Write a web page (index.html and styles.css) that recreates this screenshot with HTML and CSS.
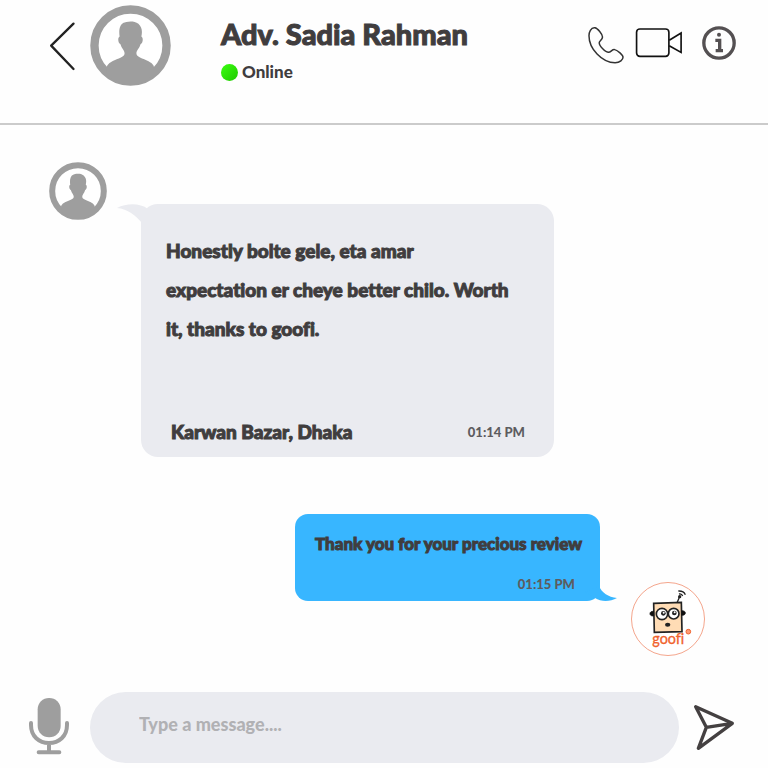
FILE: index.html
```html
<!DOCTYPE html>
<html lang="en">
<head>
    <meta charset="UTF-8">
    <meta name="viewport" content="width=device-width, initial-scale=1.0">
    <title>Adv. Sadia Rahman</title>
    <link rel="stylesheet" href="styles.css">
</head>
<body>
    <svg class="symbols" aria-hidden="true">
        <symbol id="person" viewBox="0 0 82 82">
            <circle cx="41" cy="41" r="36.5" fill="#fff" stroke="#9e9e9e" stroke-width="8.5"/>
            <path fill="#9e9e9e" d="M34 18C36 17 44 15 49 19C53 23 53 27 52 32C54 33 54 38 51 40C50 44 47 46 47 49C47 55 65 55 65 64V69C52 84 29 84 17 69V64C17 55 35 55 35 49C35 46 32 44 31 40C28 38 28 33 30 32C29 26 30 20 34 18Z"/>
        </symbol>
    </svg>

    <header class="header">
        <button class="icon-btn back" aria-label="Back">
            <svg width="27" height="50" viewBox="56 60 80 150"><path d="M129 68L62 134L129 204" fill="none" stroke="#222" stroke-width="7" stroke-linecap="round" stroke-linejoin="round"/></svg>
        </button>
        <svg class="avatar-large" role="img" aria-label="Adv. Sadia Rahman"><use href="#person"/></svg>
        <div class="contact">
            <h1>Adv. Sadia Rahman</h1>
            <p class="status"><span class="dot"></span>Online</p>
        </div>
        <div class="actions">
            <button class="icon-btn" aria-label="Call">
                <svg width="38" height="46" viewBox="50 29 115 138"><path d="M72 52C62 52 56 64 56 76C56 115 95 158 135 158C150 158 159 148 159 141C159 135 143 120 134 118C126 116 123 126 115 126C106 126 87 107 87 97C87 92 97 88 97 80C97 72 82 53 74 52Z" fill="none" stroke="#333" stroke-width="4.5"/></svg>
            </button>
            <button class="icon-btn" aria-label="Video call">
                <svg width="48" height="31" viewBox="196 50 144 94"><g fill="none" stroke="#111" stroke-width="5"><rect x="200" y="56" width="98" height="83" rx="10"/><path d="M299 90L335 68V127L299 107"/></g></svg>
            </button>
            <button class="icon-btn info" aria-label="Info">
                <svg width="34" height="34" viewBox="395 47 102 102"><circle cx="446" cy="98" r="45.5" fill="none" stroke="#545052" stroke-width="10"/><circle cx="446" cy="73" r="6" fill="#545052"/><path d="M435 90H448V121M436 121H458" fill="none" stroke="#545052" stroke-width="10"/></svg>
            </button>
        </div>
    </header>

    <main class="chat">
        <div class="row incoming">
            <svg class="avatar-small" role="img" aria-label="Adv. Sadia Rahman"><use href="#person"/></svg>
            <div class="bubble">
                <svg class="tail" width="40" height="20" viewBox="0 0 40 20"><path d="M0 4C10 -1 23 -1 31 5L38 10L26 20C18 11 11 5 0 4Z" fill="#eaebf0"/></svg>
                <p class="text">Honestly bolte gele, eta amar expectation er cheye better chilo. Worth it, thanks to goofi.</p>
                <div class="meta">
                    <span class="place">Karwan Bazar, Dhaka</span>
                    <time>01:14 PM</time>
                </div>
            </div>
        </div>

        <div class="row outgoing">
            <div class="bubble">
                <svg class="tail" width="32" height="16" viewBox="0 0 32 16"><path d="M14 0C17 7 23 11 32 12C25 16 16 16 10 12L0 6Z" fill="#38b6ff"/></svg>
                <p class="text">Thank you for your precious review</p>
                <time>01:15 PM</time>
            </div>
            <svg class="goofi" width="74" height="74" viewBox="33 35 222 222">
                <circle cx="144" cy="146" r="109.5" fill="#fff" stroke="#f4a58c" stroke-width="3"/>
                <path d="M101 99L184 96L186 184L103 186Z" fill="#ffdcb5" stroke="#222" stroke-width="5"/>
                <path d="M171 97L180 77" stroke="#222" stroke-width="4"/>
                <circle cx="179" cy="79" r="5" fill="#222"/>
                <path d="M177 71Q185 69 188 77M175 62Q191 61 196 73" fill="none" stroke="#222" stroke-width="4"/>
                <path d="M101 123C86 121 86 139 101 137ZM185 121C200 120 200 136 185 135Z" fill="#111" stroke="#111" stroke-width="2"/>
                <g fill="#fff" stroke="#222" stroke-width="5"><circle cx="126" cy="131" r="17"/><circle cx="161" cy="130" r="16"/></g>
                <circle cx="130" cy="129" r="7" fill="#222"/><circle cx="163" cy="128" r="7" fill="#222"/>
                <circle cx="131" cy="127" r="3" fill="#fff"/><circle cx="164" cy="126" r="3" fill="#fff"/>
                <ellipse cx="143" cy="163" rx="8" ry="6" fill="#222"/>
                <circle cx="205" cy="184" r="7" fill="#ff9b76" stroke="#f0622d" stroke-width="3"/>
                <text class="goofi-name" x="97" y="222">goofi</text>
            </svg>
        </div>
    </main>

    <form class="composer">
        <button type="button" class="icon-btn mic" aria-label="Record">
            <svg width="42" height="58" viewBox="24 50 126 174"><rect x="53" y="53" width="69" height="118" rx="34" fill="#9e9e9e"/><path d="M33 128V134C33 168 57 188 87 188S141 168 141 134V128M87 188V214M56 216H118" fill="none" stroke="#9e9e9e" stroke-width="12" stroke-linecap="round"/></svg>
        </button>
        <input class="message" type="text" placeholder="Type a message...." aria-label="Type a message">
        <button type="button" class="icon-btn" aria-label="Send">
            <svg width="42" height="47" viewBox="160 74 126 141"><path d="M168 82L278 132L176 207L200 144ZM200 144L278 132" fill="none" stroke="#444041" stroke-width="10" stroke-linejoin="round"/></svg>
        </button>
    </form>
</body>
</html>
```
FILE: styles.css
```css
* {
    box-sizing: border-box;
}

body {
    font-family: Lato, "Open Sans", sans-serif;
    font-weight: 900;
    font-variant-ligatures: none;
    color: #403d3e;
    background: #fefefe;
    margin: 0;
    min-height: 100vh;
    display: flex;
    flex-direction: column;
}

h1,
p {
    margin: 0;
}

svg {
    display: block;
    flex-shrink: 0;
}

.symbols {
    position: absolute;
    width: 0;
    height: 0;
}

.icon-btn {
    border: none;
    background: none;
    padding: 0;
    flex-shrink: 0;
    cursor: pointer;
}

.header {
    display: flex;
    align-items: center;
    padding: 5px 32px 37px 49px;
    border-bottom: 2px solid #cbcbcb;
}

.back {
    margin-right: 14px;
}

.avatar-large {
    width: 81px;
    height: 81px;
}

.contact {
    margin-left: 50px;
    padding-top: 8px;
}

h1 {
    font-size: 29px;
    line-height: 42px;
    font-weight: 900;
}

h1,
.text,
.place {
    -webkit-text-stroke: 1px currentColor;
}

.status {
    display: flex;
    align-items: center;
    gap: 4px;
    margin-top: 3px;
    font-size: 17px;
    line-height: 28px;
}

.dot {
    height: 17px;
    width: 17px;
    border-radius: 50%;
    background: linear-gradient(135deg, #3aff10, #1fc800);
}

.actions {
    display: flex;
    align-items: center;
    gap: 10px;
    margin-left: auto;
    padding-bottom: 6px;
}

.info {
    margin-left: 9px;
}

.chat {
    flex: 1;
    padding: 37px 63px 36px 49px;
}

.row {
    display: flex;
    align-items: flex-start;
}

.bubble {
    position: relative;
}

.tail {
    position: absolute;
}

time {
    font-size: 13px;
    color: #5d5c60;
}

.avatar-small {
    width: 58px;
    height: 58px;
}

.incoming {
    gap: 34px;
}

.incoming .bubble {
    max-width: 413px;
    margin-top: 42px;
    padding: 27px 25px 10px;
    border-radius: 17px;
    background: #eaebf0;
}

.incoming .tail {
    top: 0;
    left: -24px;
}

.incoming .text {
    padding-right: 14px;
    font-size: 19px;
    line-height: 39px;
}

.meta {
    display: flex;
    justify-content: space-between;
    align-items: center;
    margin-top: 69px;
    padding: 0 4px 0 5px;
    line-height: 30px;
}

.place {
    font-size: 19px;
}

.outgoing {
    justify-content: flex-end;
    gap: 31px;
    margin-top: 57px;
}

.outgoing .bubble {
    display: flex;
    flex-direction: column;
    gap: 12px;
    width: 305px;
    padding: 16px 0 3px 20px;
    border-radius: 13px;
    background: #38b6ff;
    line-height: 28px;
}

.outgoing .tail {
    right: -17px;
    bottom: -1px;
}

.outgoing .text {
    font-size: 17px;
}

.outgoing time {
    align-self: flex-end;
    margin-right: 25px;
}

.goofi {
    margin-top: 68px;
}

.goofi-name {
    font-family: Lato, sans-serif;
    font-size: 43px;
    font-weight: 400;
    fill: #f0622d;
    stroke: #f0622d;
    stroke-width: 1px;
}

.composer {
    display: flex;
    align-items: center;
    gap: 14px;
    padding: 0 33px 5px 28px;
}

.mic {
    padding: 0 6px 3px 0;
}

.message {
    flex: 1;
    min-width: 0;
    height: 71px;
    padding: 0 49px 8px;
    border: none;
    border-radius: 36px;
    outline: none;
    background: #eaebf0;
    color: #403d3e;
    font: inherit;
    font-size: 18px;
}

.message::placeholder {
    color: #b1b1b4;
    opacity: 1;
}
```
